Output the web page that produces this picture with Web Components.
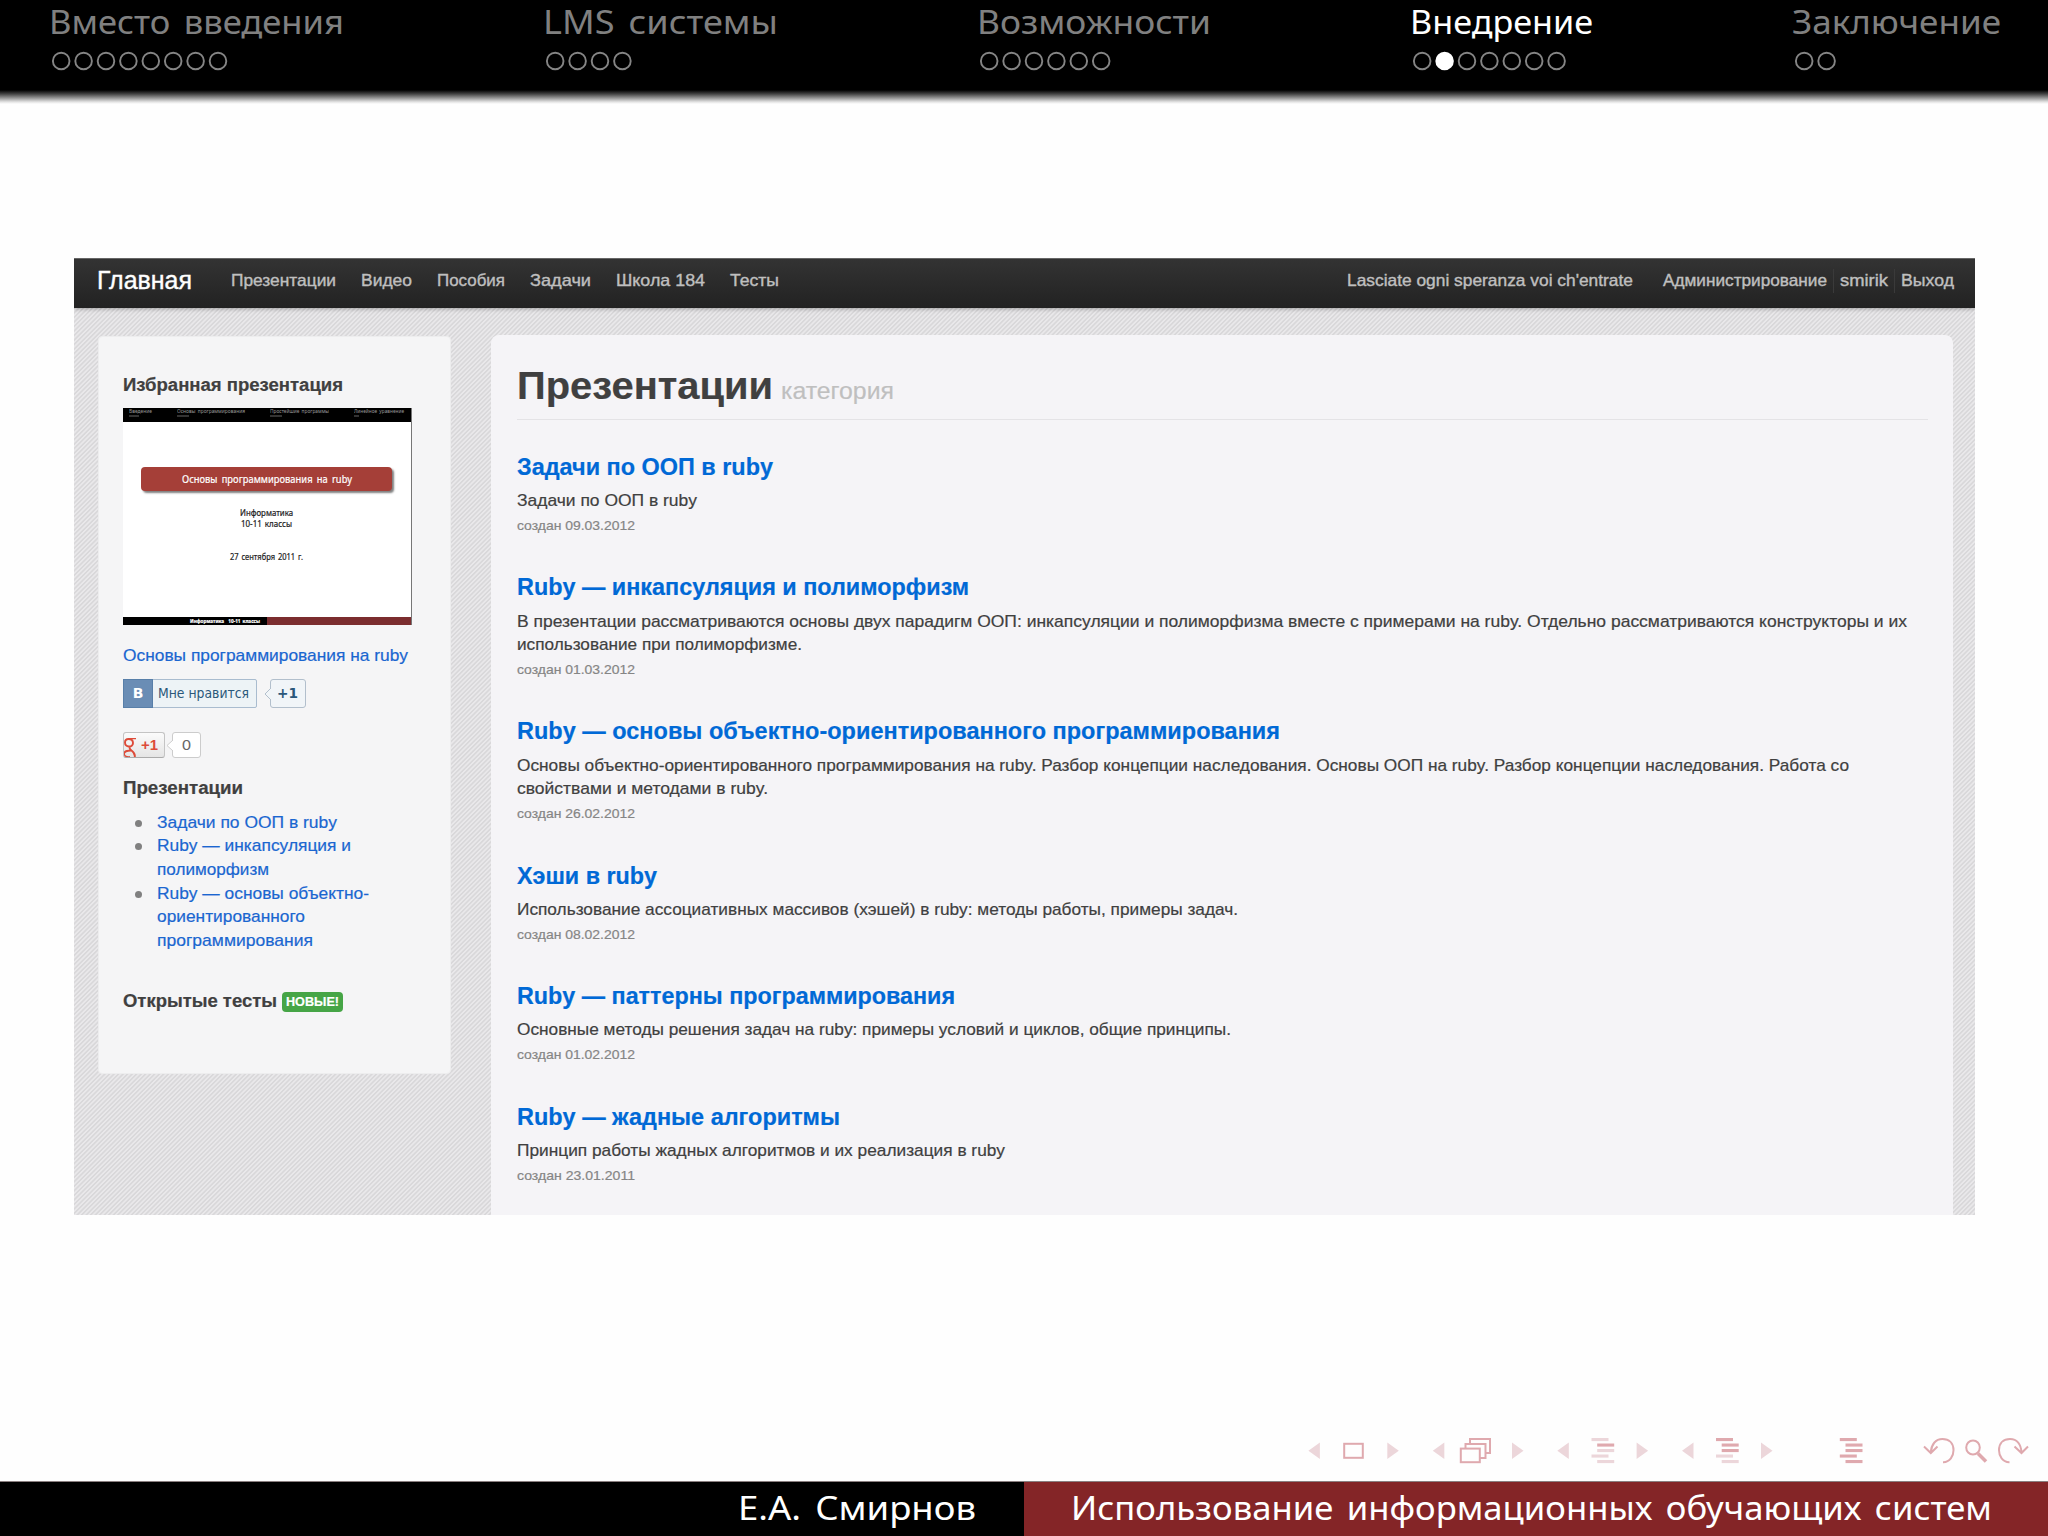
<!DOCTYPE html>
<html lang="ru">
<head>
<meta charset="utf-8">
<title>Использование информационных обучающих систем</title>
<style>
  body {
    margin: 0;
    background: #fefefe;
    font-family: "Noto Sans", sans-serif;
  }
</style>
</head>
<body>
<beamer-slide>
  <slide-head slot="head">
    <slide-section dots="8" width="295" label="Вместо введения"></slide-section>
    <slide-section dots="4" width="235" label="LMS системы"></slide-section>
    <slide-section dots="6" width="234" label="Возможности"></slide-section>
    <slide-section dots="7" current="1" width="183" label="Внедрение"></slide-section>
    <slide-section dots="2" width="209" label="Заключение"></slide-section>
  </slide-head>

  <site-window>
    <site-navbar slot="navbar"></site-navbar>
    <side-panel slot="side"></side-panel>
    <main-panel slot="main">
      <post-item width="256" date="09.03.2012" heading="Задачи по ООП в ruby">
        <fit-text width="180">Задачи по ООП в ruby</fit-text>
      </post-item>
      <post-item width="452" date="01.03.2012" heading="Ruby — инкапсуляция и полиморфизм">
        <fit-text width="1390">В презентации рассматриваются основы двух парадигм ООП: инкапсуляции и полиморфизма вместе с примерами на ruby. Отдельно рассматриваются конструкторы и их</fit-text>
        <fit-text width="285">использование при полиморфизме.</fit-text>
      </post-item>
      <post-item width="763" date="26.02.2012" heading="Ruby — основы объектно-ориентированного программирования">
        <fit-text width="1332">Основы объектно-ориентированного программирования на ruby. Разбор концепции наследования. Основы ООП на ruby. Разбор концепции наследования. Работа со</fit-text>
        <fit-text width="251">свойствами и методами в ruby.</fit-text>
      </post-item>
      <post-item width="140" date="08.02.2012" heading="Хэши в ruby">
        <fit-text width="721">Использование ассоциативных массивов (хэшей) в ruby: методы работы, примеры задач.</fit-text>
      </post-item>
      <post-item width="438" date="01.02.2012" heading="Ruby — паттерны программирования">
        <fit-text width="714">Основные методы решения задач на ruby: примеры условий и циклов, общие принципы.</fit-text>
      </post-item>
      <post-item width="323" date="23.01.2011" heading="Ruby — жадные алгоритмы">
        <fit-text width="488">Принцип работы жадных алгоритмов и их реализация в ruby</fit-text>
      </post-item>
    </main-panel>
  </site-window>

  <nav-symbols slot="symbols"></nav-symbols>
  <slide-foot slot="foot"></slide-foot>
</beamer-slide>

<script>
class BeamerSlide extends HTMLElement {
  constructor() {
    super();
    this.attachShadow({ mode: "open" });
    this.shadowRoot.innerHTML = `
      <style>
        :host {
          display: flex;
          flex-direction: column;
          width: 2048px;
          height: 1536px;
          overflow: hidden;
        }
        .body { flex: 1; padding: 154px 0 0 73.5px; }
        .symbols { display: flex; justify-content: flex-end; padding: 0 18px 16px 0; }
      </style>
      <slot name="head"></slot>
      <div class="body"><slot></slot></div>
      <div class="symbols"><slot name="symbols"></slot></div>
      <slot name="foot"></slot>
    `;
  }
}

class SlideHead extends HTMLElement {
  constructor() {
    super();
    this.attachShadow({ mode: "open" });
    this.shadowRoot.innerHTML = `
      <style>
        :host {
          display: flex;
          justify-content: space-between;
          box-sizing: border-box;
          height: 104px;
          padding: 0 47px 0 49px;
          background: linear-gradient(#000 90px, #444 94px, #aaa 99px, #e4e4e4 102px, #fefefe 104px);
        }
      </style>
      <slot></slot>
    `;
  }
}

class SlideSection extends HTMLElement {
  constructor() {
    super();
    this.attachShadow({ mode: "open" });
    const count = Number(this.getAttribute("dots"));
    const current = this.hasAttribute("current") ? Number(this.getAttribute("current")) : -1;
    let dots = "";
    for (let i = 0; i < count; i++) {
      const paint = i === current ? 'fill="#fff" stroke="#fff"' : 'fill="none" stroke="#858585"';
      dots += `<circle cx="${12.2 + i * 22.4}" cy="10" r="8.3" stroke-width="1.9" ${paint}/>`;
    }
    this.shadowRoot.innerHTML = `
      <style>
        :host {
          display: block;
          color: ${current < 0 ? "#808080" : "#fff"};
          font-size: 32px;
          line-height: 44px;
          word-spacing: 4px;
        }
        svg { display: block; margin-top: 7px; }
      </style>
      <fit-text width="${this.getAttribute("width")}">${this.getAttribute("label")}</fit-text>
      <svg width="${count * 22.4 + 4}" height="20">${dots}</svg>
    `;
  }
}

class SlideFoot extends HTMLElement {
  constructor() {
    super();
    this.attachShadow({ mode: "open" });
    this.shadowRoot.innerHTML = `
      <style>
        :host {
          display: grid;
          grid-template-columns: 1fr 1fr;
          height: 55px;
          color: #fff;
          font-size: 32px;
          line-height: 52px;
          word-spacing: 4px;
          box-shadow: inset 0 1px #8a7f80;
        }
        div { display: flex; margin-top: 1px; }
        .author { justify-content: flex-end; padding-right: 48px; background: #000; }
        .title { padding-left: 47px; background: #842527; }
      </style>
      <div class="author"><fit-text width="238">Е.А. Смирнов</fit-text></div>
      <div class="title"><fit-text width="921">Использование информационных обучающих систем</fit-text></div>
    `;
  }
}

class NavSymbols extends HTMLElement {
  constructor() {
    super();
    this.attachShadow({ mode: "open" });
    const left = x => `<path d="M${x + 11.5} 5.5v16.5L${x} 13.7z"/>`;
    const right = x => `<path d="M${x} 5.5v16.5l11.5-8.3z"/>`;
    // each flag marks a strong line of the outline icon
    const lines = (x, flags) => [...flags].map((flag, i) => {
      const dx = i === 0 || i === 3 ? 0 : 5.7;
      return `<rect x="${x + dx}" y="${1 + i * 5.5}" width="17" height="3.1" ${flag === "1" ? 'class="strong"' : ""}/>`;
    }).join("");
    this.shadowRoot.innerHTML = `
      <style>
        :host { display: block; }
        svg { display: block; fill: #ecd6da; }
        .strong { fill: #dfa9ae; }
        .line { fill: #fefefe; stroke: #dfa9ae; stroke-width: 2; }
        .open { fill: none; }
      </style>
      <svg width="722" height="28" viewBox="0 0 722 28">
        ${left(0.4)}<rect class="line" x="36.2" y="6.8" width="18.6" height="14"/>${right(79.3)}
        ${left(124.8)}
        <g class="line">
          <rect x="162" y="2" width="20" height="14"/>
          <rect x="157.5" y="7" width="20" height="14"/>
          <rect x="152.8" y="11.6" width="19" height="13.6"/>
        </g>
        ${right(204)}
        ${left(249.3)}${lines(283.5, "01000")}${right(328.6)}
        ${left(374)}${lines(408, "11100")}${right(453)}
        ${lines(531.8, "11111")}
        <g class="line open">
          <path d="M635 25.2C642 25.4 645.5 19 645.5 13.2C645.5 6 641 2 634.5 2C627.5 2 623.3 7.5 622.8 15.5M616 9.5L622.8 16L629.5 9.5"/>
          <ellipse cx="665" cy="10.5" rx="6.8" ry="7"/>
          <path stroke-width="3.5" d="M670 16.5L678 24.5"/>
          <path d="M701.5 25.2C694.5 25.4 691 19 691 13.2C691 6 695.5 2 702 2C709 2 713 7.5 713.5 15.5M706.5 9.5L713.5 16L720 9.5"/>
        </g>
      </svg>
    `;
  }
}

class SiteWindow extends HTMLElement {
  constructor() {
    super();
    this.attachShadow({ mode: "open" });
    this.shadowRoot.innerHTML = `
      <style>
        :host {
          display: flex;
          flex-direction: column;
          width: 1901px;
          height: 957px;
          overflow: hidden;
          background: repeating-linear-gradient(135deg, #d9d8da 0 1px, #e9e8ea 1.6px 2.6px, #d9d8da 3.2px);
          color: #404040;
          font: 17px/23.6px "Liberation Sans", sans-serif;
          -webkit-text-stroke: .2px;
        }
        .columns { flex: 1; display: flex; align-items: flex-start; padding: 26.7px 21.5px 0 24.5px; }
        ::slotted(main-panel) { flex: 1; margin-left: 39.5px; }
      </style>
      <slot name="navbar"></slot>
      <div class="columns">
        <slot name="side"></slot>
        <slot name="main"></slot>
      </div>
    `;
  }
}

class SiteNavbar extends HTMLElement {
  constructor() {
    super();
    this.attachShadow({ mode: "open" });
    this.shadowRoot.innerHTML = `
      <style>
        :host {
          display: flex;
          flex: none;
          align-items: flex-start;
          box-sizing: border-box;
          height: 50.3px;
          padding: 10.4px 20.5px 0 23px;
          background: linear-gradient(#333, #222);
          border-top: 1px solid #666;
          box-shadow: 0 1px 4px rgba(0,0,0,.3);
          color: #bfbfbf;
          -webkit-text-stroke: .4px;
        }
        .brand { color: #fff; font-size: 25.5px; margin-right: 39px; }
        .links { display: flex; gap: 25px; }
        .user { display: flex; margin-left: auto; }
        .sep { border-left: 1px solid #3a3a3a; margin: 0 6px; }
      </style>
      <fit-text class="brand" width="95">Главная</fit-text>
      <div class="links">
        <fit-text width="105">Презентации</fit-text>
        <fit-text width="51">Видео</fit-text>
        <fit-text width="68">Пособия</fit-text>
        <fit-text width="61">Задачи</fit-text>
        <fit-text width="89">Школа 184</fit-text>
        <fit-text width="49">Тесты</fit-text>
      </div>
      <div class="user">
        <fit-text width="286">Lasciate ogni speranza voi ch'entrate</fit-text>
        <fit-text width="164" style="margin-left: 30px">Администрирование</fit-text>
        <i class="sep"></i>
        <fit-text width="48">smirik</fit-text>
        <i class="sep"></i>
        <fit-text width="53">Выход</fit-text>
      </div>
    `;
  }
}

class SidePanel extends HTMLElement {
  constructor() {
    super();
    this.attachShadow({ mode: "open" });
    this.shadowRoot.innerHTML = `
      <style>
        :host {
          display: block;
          box-sizing: border-box;
          width: 353px;
          height: 738px;
          margin-top: 1.5px;
          padding: 35.5px 0 0 24.4px;
          background: #f5f5f6;
          border: 1px solid #ededee;
          border-radius: 4px;
        }
        h5 { display: flex; margin: 0; font-size: 18.3px; line-height: 24px; }
        a { display: block; color: #1a66d0; }
        ul { margin: 11px 0 36.6px; padding: 0; list-style: none; }
        li { display: flex; }
        li::before {
          content: "";
          width: 7px;
          height: 7px;
          margin: 9px 14.6px 0 12px;
          border-radius: 50%;
          background: #808080;
        }
        .badge {
          height: 19.7px;
          margin: 3.6px 0 0 5px;
          padding: 0 4px;
          border-radius: 4px;
          background: #46a546;
          color: #fff;
          font-size: 12.8px;
          line-height: 20.5px;
        }
      </style>
      <h5><fit-text width="220">Избранная презентация</fit-text></h5>
      <slide-thumb></slide-thumb>
      <a><fit-text width="285">Основы программирования на ruby</fit-text></a>
      <like-buttons></like-buttons>
      <h5><fit-text width="120">Презентации</fit-text></h5>
      <ul>
        <li><a><fit-text width="180">Задачи по ООП в ruby</fit-text></a></li>
        <li><a>
          <fit-text width="194">Ruby — инкапсуляция и</fit-text>
          <fit-text width="112">полиморфизм</fit-text>
        </a></li>
        <li><a>
          <fit-text width="212">Ruby — основы объектно-</fit-text>
          <fit-text width="148">ориентированного</fit-text>
          <fit-text width="156">программирования</fit-text>
        </a></li>
      </ul>
      <h5><fit-text width="154">Открытые тесты</fit-text><span class="badge"><fit-text width="53">НОВЫЕ!</fit-text></span></h5>
    `;
  }
}

class SlideThumb extends HTMLElement {
  constructor() {
    super();
    this.attachShadow({ mode: "open" });
    this.shadowRoot.innerHTML = `
      <style>
        :host {
          display: flex;
          flex-direction: column;
          align-items: center;
          box-sizing: border-box;
          width: 288.5px;
          height: 216.6px;
          margin: 11.3px 0 18.7px -.4px;
          background: #fff;
          border-right: 1px solid #777;
          color: #222;
          font: 8px/10.6px "Noto Sans", sans-serif;
          word-spacing: 1px;
        }
        .head {
          display: flex;
          justify-content: space-between;
          box-sizing: border-box;
          width: 100%;
          height: 13.3px;
          padding: 0 6px;
          background: #000;
          color: #999;
          font-size: 4.8px;
          line-height: 7px;
          -webkit-text-stroke: 0;
        }
        .dots { height: 1.5px; background: #333; }
        .title {
          display: flex;
          justify-content: center;
          width: 251px;
          height: 24px;
          margin: 45.7px 0 17px;
          border-radius: 4px;
          background: #a53f38;
          box-shadow: 2px 2px 2px rgba(0,0,0,.5);
          color: #fff;
          font-size: 10.3px;
          line-height: 24px;
          word-spacing: 2px;
        }
        .date { margin-top: 22.7px; }
        .foot {
          display: grid;
          grid-template-columns: 1fr 1fr;
          width: 100%;
          height: 8.3px;
          margin-top: auto;
          background: linear-gradient(90deg, #000 50%, #7b2d2f 50%);
          color: #fff;
          font-size: 5.4px;
          font-weight: bold;
          line-height: 8px;
        }
        .foot fit-text { margin-left: 67px; }
      </style>
      <div class="head">
        <div><fit-text width="23">Введение</fit-text><div class="dots" style="width: 10px"></div></div>
        <div><fit-text width="68">Основы программирования</fit-text><div class="dots" style="width: 12px"></div></div>
        <div><fit-text width="59">Простейшие программы</fit-text><div class="dots" style="width: 12px"></div></div>
        <div><fit-text width="50">Линейное уравнение</fit-text><div class="dots" style="width: 5px"></div></div>
      </div>
      <div class="title"><fit-text width="170">Основы программирования на ruby</fit-text></div>
      <fit-text width="53">Информатика</fit-text>
      <fit-text width="51">10-11 классы</fit-text>
      <fit-text class="date" width="73">27 сентября 2011 г.</fit-text>
      <div class="foot"><fit-text width="70">Информатика&nbsp; 10-11 классы</fit-text></div>
    `;
  }
}

class LikeButtons extends HTMLElement {
  constructor() {
    super();
    this.attachShadow({ mode: "open" });
    this.shadowRoot.innerHTML = `
      <style>
        :host { display: block; margin: 11.7px 0 18.2px -.4px; -webkit-text-stroke: 0; }
        .row { display: flex; box-sizing: border-box; }
        .arrow { display: block; position: relative; margin-right: -1px; }
        .button, .count { display: flex; box-sizing: border-box; border: 1px solid; }
        .count { justify-content: center; border-radius: 3px; }
        .vk { height: 28.7px; color: #2b587a; font: 14px/26px "DejaVu Sans", sans-serif; }
        .vk .button { width: 134px; border-color: #a9bccf; border-radius: 2px; background: #edf3f6; }
        .vk b { width: 28px; background: #6a8db5; box-shadow: 0 0 0 1px #587fa9; color: #fff; text-align: center; line-height: 27px; }
        .vk .button fit-text { margin-left: 6px; }
        .vk .arrow { margin-left: 6.5px; }
        .vk .count { width: 36.5px; border-color: #b2bfcc; background: #f1f5f8; font-weight: bold; font-size: 14.5px; }
        .google { height: 26px; margin-top: 24px; font: 14.5px/25px "Liberation Sans", sans-serif; }
        .google .button { overflow: hidden; width: 42px; border-color: #c4c4c4 #c4c4c4 #aaa; border-radius: 3px; background: linear-gradient(#fbfbfb, #e5e5e5); color: #dd4b39; font-weight: bold; }
        .google .button svg { margin-right: 4px; }
        .google .arrow { margin-left: 1px; }
        .google .count { width: 29px; border-color: #ccc; background: #fff; color: #666; }
      </style>
      <div class="row vk">
        <div class="button"><b>В</b><fit-text width="91">Мне нравится</fit-text></div>
        <svg class="arrow" width="7" height="28" viewBox="0 0 7 28"><path d="M7 9L1 15L7 21" fill="#f1f5f8" stroke="#b2bfcc"/></svg>
        <div class="count"><fit-text width="21">+1</fit-text></div>
      </div>
      <div class="row google">
        <div class="button">
          <svg width="13" height="26" viewBox="0 0 13 26" fill="none" stroke="#dd4b39">
            <path stroke-width="1.9" d="M4.5 6C2 6 1 7.500 1 9.500C1 12 2.500 13.500 5 13.500C7.500 13.500 9 12 9 10C9 7.500 7.500 6 4.500 6M6 13.500C5 15 5.500 16 7.500 17.500C11 20 11.500 22 10.500 25M7 17.500C3 17.500 0 18.500 0 21C0 23.500 3 24.500 6 24"/>
            <path stroke-width="1.3" d="M4 5.700H12"/>
          </svg>
          <fit-text width="17">+1</fit-text>
        </div>
        <svg class="arrow" width="7" height="26" viewBox="0 0 7 26"><path d="M7 8L1 13.5L7 19" fill="#fff" stroke="#ccc"/></svg>
        <div class="count"><fit-text width="9">0</fit-text></div>
      </div>
    `;
  }
}

class MainPanel extends HTMLElement {
  constructor() {
    super();
    this.attachShadow({ mode: "open" });
    this.shadowRoot.innerHTML = `
      <style>
        :host {
          display: block;
          box-sizing: border-box;
          height: 900px;
          padding: 26.7px 25px 0 26px;
          border-radius: 8px;
          background: #f5f4f7;
        }
        header {
          display: flex;
          align-items: baseline;
          box-sizing: border-box;
          height: 58.3px;
          margin-bottom: 28.8px;
          border-bottom: 1.5px solid #e4e3e6;
        }
        h1 { margin: 0 8px 0 0; font-size: 39.3px; line-height: 47px; }
        small { color: #bfbfbf; font-size: 23.6px; }
      </style>
      <header>
        <h1><fit-text width="256">Презентации</fit-text></h1>
        <small><fit-text width="113">категория</fit-text></small>
      </header>
      <slot></slot>
    `;
  }
}

class PostItem extends HTMLElement {
  constructor() {
    super();
    this.attachShadow({ mode: "open" });
    this.shadowRoot.innerHTML = `
      <style>
        :host { display: block; margin-bottom: 32.1px; }
        h3 { margin: 0 0 4.2px; color: #0069d6; font-size: 23.6px; line-height: 36px; }
        time { display: block; margin-top: 1.1px; color: #858585; font-size: 13px; }
      </style>
      <h3><fit-text width="${this.getAttribute("width")}">${this.getAttribute("heading")}</fit-text></h3>
      <slot></slot>
      <time><fit-text width="118">создан ${this.getAttribute("date")}</fit-text></time>
    `;
  }
}

// One line of text, stretched or squeezed to the given width
class FitText extends HTMLElement {
  constructor() {
    super();
    this.attachShadow({ mode: "open" });
    this.shadowRoot.innerHTML = `
      <style>
        :host { display: block; white-space: nowrap; text-align: left; }
        span { display: inline-block; transform-origin: 0 50%; }
      </style>
      <span><slot></slot></span>
    `;
  }

  connectedCallback() {
    const width = Number(this.getAttribute("width"));
    const span = this.shadowRoot.querySelector("span");
    this.style.width = `${width}px`;
    span.style.transform = `scaleX(${width / span.getBoundingClientRect().width})`;
  }
}

customElements.define("beamer-slide", BeamerSlide);
customElements.define("slide-head", SlideHead);
customElements.define("slide-section", SlideSection);
customElements.define("slide-foot", SlideFoot);
customElements.define("nav-symbols", NavSymbols);
customElements.define("site-window", SiteWindow);
customElements.define("site-navbar", SiteNavbar);
customElements.define("side-panel", SidePanel);
customElements.define("slide-thumb", SlideThumb);
customElements.define("like-buttons", LikeButtons);
customElements.define("main-panel", MainPanel);
customElements.define("post-item", PostItem);
customElements.define("fit-text", FitText);
</script>
</body>
</html>
